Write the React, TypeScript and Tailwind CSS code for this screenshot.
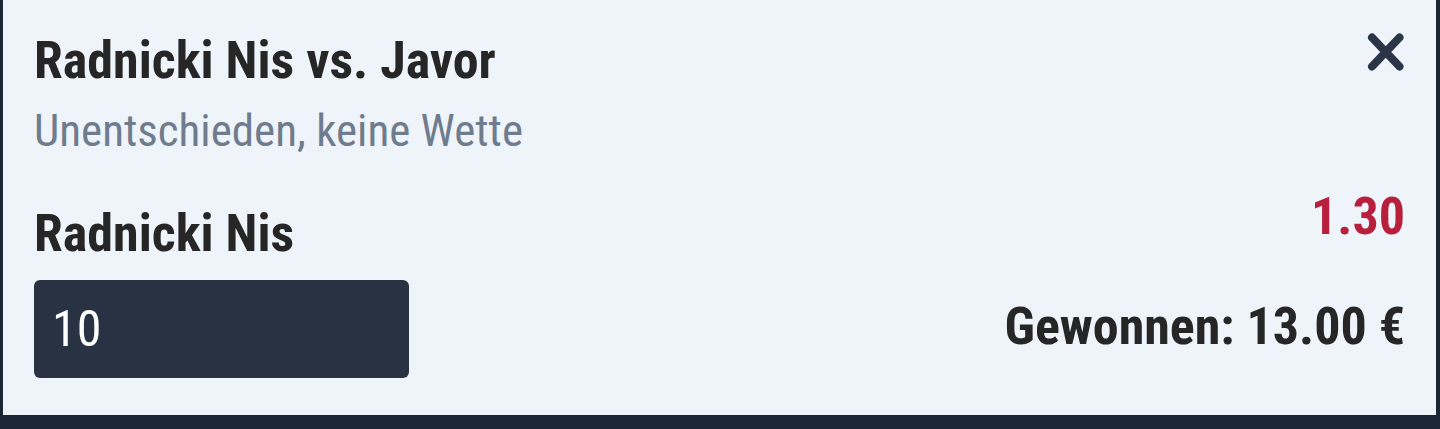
import React from "react";

const font = "font-['Roboto_Condensed','Liberation_Sans_Narrow',Roboto,sans-serif] [font-stretch:75%]";

export default function App() {
  return (
    <div className={`w-[1440px] h-[429px] bg-[#1c2535] pl-[3px] pr-[4px] pb-[14px] ${font}`}>
      <div className="h-full bg-[#eff4fb] pt-[35px] px-[31px]">
        <div className="flex justify-between items-start">
          <div>
            <h1 className="text-[52px] leading-none font-bold text-[#262626]">Radnicki Nis vs. Javor</h1>
            <p className="mt-[21px] text-[45px] leading-none text-[#6f7c8e]">Unentschieden, keine Wette</p>
          </div>
          <svg width="40" height="40" viewBox="0 0 40 40" className="-mt-[4px]">
            <path d="M7 6.5 L34.5 35.5 M34.5 6.5 L7 35.5" stroke="#2a3548" strokeWidth="8" strokeLinecap="round" fill="none" />
          </svg>
        </div>
        <div className="mt-[38px] flex justify-between items-start">
          <div className="pt-[17px]">
            <div className="text-[52px] leading-none font-bold text-[#262626]">Radnicki Nis</div>
            <div className="mt-[20px] w-[375px] h-[98px] rounded-[6px] bg-[#283242] flex items-center pl-[18px]">
              <span className="text-[50px] leading-none text-white">10</span>
            </div>
          </div>
          <div className="flex flex-col items-end">
            <div className="text-[52px] leading-none font-bold text-[#b81f3d]">1.30</div>
            <div className="mt-[58px] text-[52px] leading-none font-bold text-[#262626]">Gewonnen: 13.00 €</div>
          </div>
        </div>
      </div>
    </div>
  );
}
